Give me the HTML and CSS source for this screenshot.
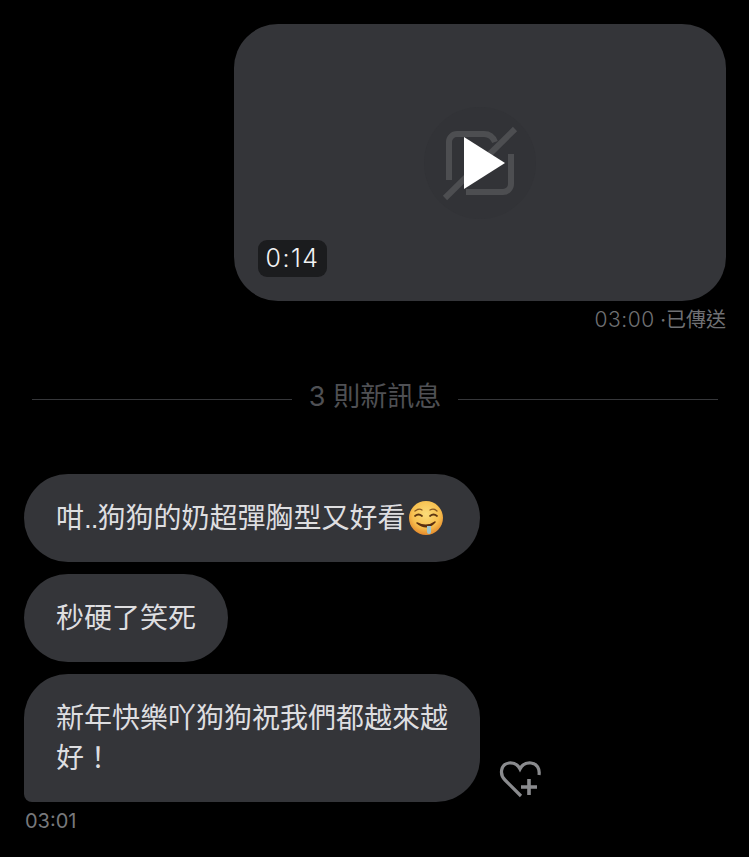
FILE: index.html
```html
<!DOCTYPE html>
<html lang="zh-Hant">
<head>
    <meta charset="UTF-8">
    <meta name="viewport" content="width=device-width, initial-scale=1.0">
    <title>Chat</title>
    <link rel="stylesheet" href="styles.css">
</head>
<body>
    <div class="chat">
        <div class="sent">
            <div class="video">
                <div class="video_icon">
                    <svg class="no_camera" width="80" height="80" viewBox="0 0 80 80" fill="none">
                        <path d="M71 32V62a8 8 0 0 1-8 8H26" stroke="#4d4e51" stroke-width="6"/>
                        <path d="M9 58V20a8 8 0 0 1 8-8H44c5 0 9 3 11 8" stroke="#4d4e51" stroke-width="6"/>
                        <path d="M75 7 5 76" stroke="#4d4e51" stroke-width="6"/>
                    </svg>
                    <span class="play"></span>
                </div>
                <span class="duration">0:14</span>
            </div>
            <div class="sent_meta"><span class="time">03:00</span> ·已傳送</div>
        </div>

        <div class="divider">
            <span class="line"></span>
            <span class="divider_text">3 則新訊息</span>
            <span class="line"></span>
        </div>

        <div class="received">
            <div class="bubble bubble_first">
                <span>咁<span class="dots">..</span>狗狗的奶超彈胸型又好看</span>
                <svg class="emoji" width="34" height="34" viewBox="0 0 34 34">
                    <defs>
                        <radialGradient id="face" cx="50%" cy="38%" r="62%">
                            <stop offset="0" stop-color="#fbdc7a"/>
                            <stop offset="0.65" stop-color="#f7c04f"/>
                            <stop offset="1" stop-color="#e58a2c"/>
                        </radialGradient>
                    </defs>
                    <circle cx="17" cy="17" r="17" fill="url(#face)"/>
                    <path d="M6 10q4-3 7-1M21 9q4-2 7 1" stroke="#8a5a22" stroke-width="1.300" fill="none" stroke-linecap="round"/>
                    <path d="M6 15q3.500-3 7 0M21 15q3.500-3 7 0" stroke="#5f3812" stroke-width="1.700" fill="none" stroke-linecap="round"/>
                    <path d="M8 22q10 5 18-1q-8 9-18 1z" stroke="#5a2e10" stroke-width="1.500" fill="#5a2e10" stroke-linejoin="round"/>
                    <path d="M18 25h4v6a2 2 0 0 1-4 0z" fill="#9cc4cf"/>
                </svg>
            </div>
            <div class="bubble">秒硬了笑死</div>
            <div class="last_row">
                <div class="bubble bubble_last">新年快樂吖狗狗祝我們都越來越好！</div>
                <svg class="heart_add" width="44" height="40" viewBox="0 0 44 40" fill="none" stroke="#8a8b8e">
                    <path d="M23 37 7 21C1 15 3 5 11 4c5-.500 9 2 11 6 2-4 6-6.500 11-6 6 .500 9 6 8 12" stroke-width="3.200"/>
                    <path d="M31 20v16M23 28h16" stroke-width="3.600"/>
                </svg>
            </div>
            <div class="received_meta">03:01</div>
        </div>
    </div>
</body>
</html>
```

FILE: styles.css
```css
* { margin: 0; padding: 0; box-sizing: border-box; }
html, body { background: #000; }
body {
    width: 749px;
    height: 857px;
    overflow: hidden;
    font-family: Inter, "Noto Sans CJK TC", sans-serif;
}
.chat {
    padding: 24px 23px 0 24px;
}
.sent {
    display: flex;
    flex-direction: column;
    align-items: flex-end;
}
.video {
    width: 492px;
    height: 277px;
    background: #343539;
    border-radius: 44px;
    position: relative;
    display: flex;
    align-items: center;
    justify-content: center;
}
.video_icon {
    width: 112px;
    height: 112px;
    border-radius: 50%;
    background: #323337;
    position: relative;
    display: flex;
    align-items: center;
    justify-content: center;
}
.no_camera {
    position: absolute;
    left: 16px;
    top: 15px;
}
.play {
    position: absolute;
    left: 40px;
    top: 30px;
    border-left: 41px solid #fff;
    border-top: 26px solid transparent;
    border-bottom: 26px solid transparent;
}
.duration {
    position: absolute;
    left: 24px;
    bottom: 24px;
    width: 69px;
    height: 37px;
    line-height: 37px;
    text-align: center;
    background: #1b1c1e;
    border-radius: 9px;
    color: #f2f2f3;
    font-size: 25px;
    font-weight: 300;
    letter-spacing: 1.500px;
}
.sent_meta {
    margin-top: 7px;
    color: #6f7073;
    font-size: 20px;
    line-height: 24px;
}
.time {
    font-size: 21px;
    font-weight: 300;
    letter-spacing: 0.500px;
}
.divider {
    margin: 47px 8px 0;
    display: flex;
    align-items: center;
    gap: 17px;
    height: 36px;
}
.line {
    flex: 1;
    height: 1px;
    margin-top: 4px;
    background: #36373a;
}
.divider_text {
    color: #4f5054;
    font-size: 27px;
    line-height: 36px;
}
.received {
    margin-top: 59px;
    display: flex;
    flex-direction: column;
    align-items: flex-start;
    gap: 12px;
}
.bubble {
    background: #343539;
    color: #dedee0;
    font-family: "Liberation Sans", "Noto Sans CJK TC", sans-serif;
    font-size: 28px;
    line-height: 40px;
    padding: 25px 32px 23px;
    border-radius: 44px;
}
.bubble_first {
    width: 456px;
    height: 88px;
    display: flex;
    align-items: center;
    white-space: nowrap;
    padding-right: 0;
}
.dots {
    letter-spacing: -1px;
}
.emoji {
    flex: none;
    margin: -2px 0 0 3px;
}
.last_row {
    display: flex;
    align-items: flex-end;
    gap: 18px;
}
.bubble_last {
    width: 456px;
    height: 128px;
    border-bottom-left-radius: 8px;
}
.heart_add {
    margin-bottom: 3px;
}
.received_meta {
    margin-top: -5px;
    margin-left: 1px;
    color: #77787b;
    font-size: 20px;
    font-weight: 400;
    line-height: 24px;
}
```
